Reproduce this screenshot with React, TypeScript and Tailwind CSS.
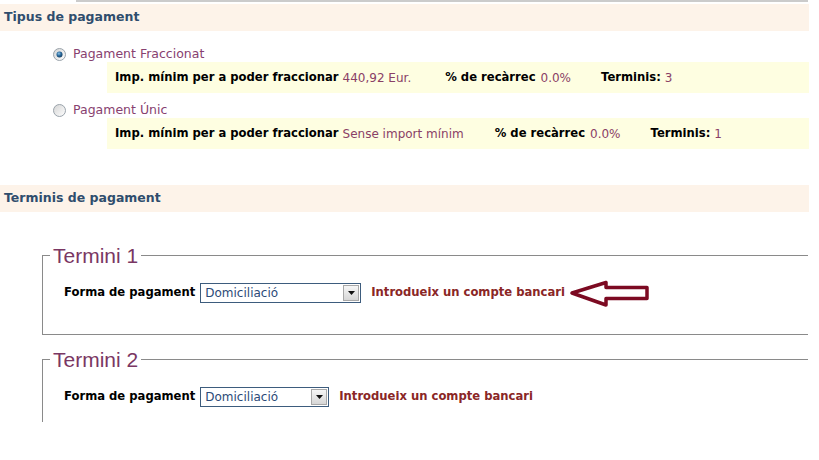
import React from "react";

const VERDANA = { fontFamily: '"DejaVu Sans", Verdana, sans-serif' };

function Radio({ checked }: { checked?: boolean }) {
  return (
    <svg width="13" height="13" viewBox="0 0 13 13" className="shrink-0">
      <defs>
        <linearGradient id={checked ? "rg-on" : "rg-off"} x1="0" y1="0" x2="1" y2="1">
          <stop offset="0" stopColor="#d4d4d4" />
          <stop offset="1" stopColor="#ffffff" />
        </linearGradient>
        <radialGradient id="dot" cx="0.4" cy="0.35" r="0.7">
          <stop offset="0" stopColor="#8fc3e8" />
          <stop offset="0.5" stopColor="#2a6a9c" />
          <stop offset="1" stopColor="#123a5e" />
        </radialGradient>
      </defs>
      <circle cx="6.5" cy="6.5" r="6" fill={checked ? "url(#rg-on)" : "url(#rg-off)"} stroke="#9aa3ab" strokeWidth="1" />
      {checked && <circle cx="6.5" cy="6.5" r="3" fill="url(#dot)" />}
    </svg>
  );
}

function SelectBox({ width }: { width: string }) {
  return (
    <div className={`${width} h-[20px] border border-[#3d5c7d] bg-white flex items-center justify-between`}>
      <span className="pl-[4px] text-[12px] text-[#2c4a78] leading-none">Domiciliació</span>
      <span className="mr-[1px] w-[16px] h-[16px] border border-[#a8a8a8] bg-gradient-to-b from-[#f6f6f6] to-[#d6d6d6] flex items-center justify-center">
        <svg width="7" height="4" viewBox="0 0 7 4">
          <path d="M0 0h7L3.5 4z" fill="#111" />
        </svg>
      </span>
    </div>
  );
}

function Arrow() {
  return (
    <svg width="80" height="28" viewBox="0 0 80 28" className="shrink-0">
      <path
        d="M2 13 L36 2.5 L36 7.5 L77 7.5 L77 18.5 L36 18.5 L36 25 Z"
        fill="white"
        stroke="#7c0a22"
        strokeWidth="3.5"
        strokeLinejoin="round"
      />
    </svg>
  );
}

function Termini({ n, selectWidth, arrow, bottom }: { n: number; selectWidth: string; arrow?: boolean; bottom?: boolean }) {
  return (
    <fieldset
      className={`ml-[42px] mr-[11px] border-l border-t border-[#8a8a8a] ${bottom ? "border-b pb-[31px]" : "pb-[15px]"}`}
    >
      <legend
        className="ml-[7px] px-[3px] text-[21px] leading-[23px] text-[#7a3763]"
        style={{ fontFamily: '"Liberation Sans", Arial, sans-serif' }}
      >
        Termini {n}
      </legend>
      <div className="pt-[16px] pl-[21px] flex items-center h-[20px] box-content">
        <span className="text-[11.6px] font-bold text-black mr-[5px]">Forma de pagament</span>
        <SelectBox width={selectWidth} />
        <span className="ml-[10px] text-[11.6px] font-bold text-[#8a2626]">Introdueix un compte bancari</span>
        {arrow && (
          <span className="ml-[5px] mt-[2px]">
            <Arrow />
          </span>
        )}
      </div>
    </fieldset>
  );
}

export default function App() {
  return (
    <div className="w-[819px] h-[460px] bg-white overflow-hidden" style={VERDANA}>
      {/* top edge */}
      <div className="ml-[76px] mr-[11px] h-[2px] bg-[#cbcbcb]" />

      {/* Tipus de pagament */}
      <div className="mt-[2px] mr-[10px] h-[27px] bg-[#fdf3e9] flex items-center pl-[4px]">
        <span className="text-[12.5px] font-bold text-[#2f4d6d]">Tipus de pagament</span>
      </div>

      <div className="mt-[15px] pl-[53px] h-[16px] flex items-center">
        <Radio checked />
        <span className="ml-[7px] text-[12.5px] text-[#874170]">Pagament Fraccionat</span>
      </div>
      <div className="ml-[107px] mr-[10px] h-[31px] bg-[#fefee1] flex items-center pl-[8px] text-[11.6px]">
        <b className="text-black">Imp. mínim per a poder fraccionar</b>
        <span className="ml-[4px] text-[12px] text-[#8a4066]">440,92 Eur.</span>
        <b className="ml-[34px] text-black">% de recàrrec</b>
        <span className="ml-[5px] text-[12px] text-[#8a4066]">0.0%</span>
        <b className="ml-[30px] text-black">Terminis:</b>
        <span className="ml-[4px] text-[12px] text-[#8a4066]">3</span>
      </div>

      <div className="mt-[9px] pl-[53px] h-[16px] flex items-center">
        <Radio />
        <span className="ml-[7px] text-[12.5px] text-[#874170]">Pagament Únic</span>
      </div>
      <div className="ml-[107px] mr-[10px] h-[31px] bg-[#fefee1] flex items-center pl-[8px] text-[11.6px]">
        <b className="text-black">Imp. mínim per a poder fraccionar</b>
        <span className="ml-[4px] text-[12px] text-[#8a4066]">Sense import mínim</span>
        <b className="ml-[31px] text-black">% de recàrrec</b>
        <span className="ml-[5px] text-[12px] text-[#8a4066]">0.0%</span>
        <b className="ml-[30px] text-black">Terminis:</b>
        <span className="ml-[4px] text-[12px] text-[#8a4066]">1</span>
      </div>

      {/* Terminis de pagament */}
      <div className="mt-[36px] mr-[10px] h-[27px] bg-[#fdf3e9] flex items-center pl-[4px]">
        <span className="text-[12.5px] font-bold text-[#2f4d6d]">Terminis de pagament</span>
      </div>

      <div className="mt-[32px]">
        <Termini n={1} selectWidth="w-[161px]" arrow bottom />
      </div>
      <div className="mt-[13px]">
        <Termini n={2} selectWidth="w-[129px]" />
      </div>
    </div>
  );
}
